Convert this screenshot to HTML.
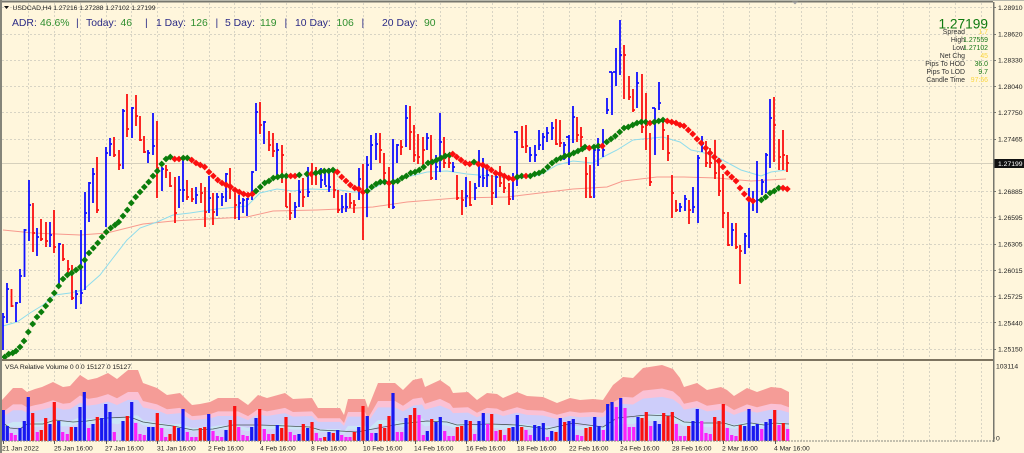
<!DOCTYPE html>
<html><head><meta charset="utf-8"><style>
html,body{margin:0;padding:0;background:#fff6dc}
svg{display:block;font-family:"Liberation Sans",sans-serif}
</style></head><body>
<svg width="1024" height="453" viewBox="0 0 1024 453" xmlns="http://www.w3.org/2000/svg">
<defs>
<marker id="dg" markerUnits="userSpaceOnUse" markerWidth="8" markerHeight="8" refX="4" refY="4" overflow="visible"><path d="M4 .6L7.400 4 4 7.400 .6 4z" fill="#0b7d0b"/></marker>
<marker id="dr" markerUnits="userSpaceOnUse" markerWidth="8" markerHeight="8" refX="4" refY="4" overflow="visible"><path d="M4 .6L7.400 4 4 7.400 .6 4z" fill="#fb0f0f"/></marker>
<path id="band" d="M2 441V400L13 388 22 388 27 392 35 389 42 387 53 382 63 387 70 386 80 375 88 380 97 378 108 373 117 379 128 370 138 370 143 383 157 388 167 395 180 393 192 405 200 404 210 402 218 398 238 398 248 405 258 395 267 398 285 393 293 399 312 398 318 408 340 408 344 415 348 399 365 399 368 408 378 383 395 383 403 390 413 380 422 378 425 387 440 380 450 387 453 393 468 392 477 400 487 393 497 394 503 398 517 392 527 396 543 397 557 403 570 398 580 400 593 399 603 400 613 385 623 377 633 378 643 368 662 365 673 369 680 378 684 387 697 383 707 390 721 387 727 390 734 396 747 388 757 392 771 387 781 388 789 392V441z"/>
</defs>
<rect width="1024" height="453" fill="#fff6dc"/>
<!-- grid -->
<path d="M2 7.5H993M2 34.5H993M2 60.5H993M2 86.5H993M2 112.5H993M2 139.5H993M2 191.5H993M2 217.5H993M2 244.5H993M2 270.5H993M2 296.5H993M2 322.5H993M2 349.5H993" stroke="#d8d4c4" stroke-width="1" stroke-dasharray="2 2" fill="none"/>
<path d="M28.5 3V441M54.5 3V441M80.5 3V441M106.5 3V441M131.5 3V441M157.5 3V441M183.5 3V441M209.5 3V441M234.5 3V441M260.5 3V441M286.5 3V441M312.5 3V441M337.5 3V441M363.5 3V441M389.5 3V441M415.5 3V441M440.5 3V441M466.5 3V441M492.5 3V441M517.5 3V441M543.5 3V441M569.5 3V441M595.5 3V441M621.5 3V441M646.5 3V441M672.5 3V441M697.5 3V441M723.5 3V441M749.5 3V441M775.5 3V441M801.5 3V441M826.5 3V441M852.5 3V441M877.5 3V441M903.5 3V441M929.5 3V441M955.5 3V441M981.5 3V441" stroke="#d8d4c4" stroke-width="1" stroke-dasharray="2 2" fill="none"/>
<path d="M2 163.5H993" stroke="#d6d0bc" stroke-width="1"/>
<!-- moving averages -->
<polyline fill="none" stroke="#f79a8e" stroke-width="1" points="3,230 33,233 80,235 107,233 127,228 143,224 173,221 207,219 247,217 273,211 317,210 340,209 373,207 407,202 457,198 507,197 540,193 573,189 607,187 623,181 657,177 684,177 717,178 751,181 786,179"/>
<polyline fill="none" stroke="#8fdcec" stroke-width="1" points="3,326 17,322 30,313 43,305 55,295 70,293 83,290 100,275 113,258 127,240 140,228 157,222 173,215 190,213 217,209 247,206 260,193 277,189 293,191 310,189 340,190 353,192 367,192 383,183 407,177 427,172 447,171 467,174 490,176 513,179 540,175 557,165 573,161 593,163 607,155 617,150 633,140 663,137 680,142 691,150 701,152 717,157 741,170 761,176 771,172 786,170"/>
<!-- price bars -->
<path fill="none" stroke="#1010ff" stroke-width="1.800" d="M3 313V350M3 317h2M7 283V323M7 289h2M16 302V322M16 303h2M20 269V303M20 276h2M24.500 229V277M24.500 230h2M29 180V241M29 205h2M37 228V256M37 237h2M50 222V247M50 235h2M59 243V284M59 244h2M76 290V309M76 294h2M81 230V304M81 293h2M85 192V290M85 213h2M89 182V222M89 183h2M93 168V203M93 174h2M106 147V227M106 153h2M110 138V156M110 144h2M123 109V169M123 111h2M132 107V138M132 108h2M148 150V163M148 153h2M153 113V155M153 146h2M162 167V191M162 169h2M179 176V208M179 190h2M183 160V202M183 190h2M196 187V204M196 195h2M209 176V213M209 198h2M217 193V216M217 197h2M222 193V206M222 197h2M226 173V202M226 174h2M239 195V220M239 203h2M243 198V213M243 200h2M247 198V216M247 199h2M252 171V200M252 172h2M256 103V171M256 112h2M264 121V144M264 122h2M277 143V175M277 150h2M295 202V218M295 207h2M299 180V207M299 192h2M308 167V197M308 192h2M321 168V188M321 180h2M325 170V185M325 186h2M329 168V192M329 187h2M342 195V213M342 207h2M346 193V212M346 207h2M359 168V200M359 179h2M367 156V217M367 165h2M371 135V170M371 145h2M376 133V160M376 144h2M393 139V209M393 207h2M397 144V163M397 145h2M406 105V147M406 118h2M427 133V150M427 138h2M436 155V180M436 167h2M440 113V172M440 142h2M453 162V172M453 167h2M466 177V207M466 196h2M475 183V200M475 188h2M479 150V187M479 177h2M483 158V187M483 178h2M487 168V187M487 175h2M496 172V198M496 177h2M513 173V200M513 178h2M517 131V186M517 132h-3M530 147V162M530 155h2M535 145V162M535 155h2M539 130V150M539 145h2M543 133V150M543 137h2M547 127V142M547 133h2M552 122V140M552 128h2M564 142V160M564 145h2M569 135V165M569 137h-3M573 106V143M573 117h2M594 147V198M594 150h2M598 138V166M598 150h2M603 129V157M603 150h2M607 98V114M607 110h2M612 72V115M612 72h-3M616 48V86M616 72h-3M620 20V75M620 55h2M637 72V108M637 83h2M655 108V155M655 108h-3M659 82V110M659 103h2M680 203V212M680 207h2M685 195V211M685 199h2M693 187V213M693 207h2M698 155V223M698 158h2M702 136V152M702 144h2M732 223V246M732 230h2M745 233V254M745 236h2M749 188V248M749 200h2M753 191V211M753 200h2M757 161V213M757 200h2M762 179V195M762 182h2M766 153V193M766 155h2M770 99V168M770 118h2"/>
<path fill="none" stroke="#fb1010" stroke-width="1.800" d="M11.500 289V307M11.500 306h2M33 203V252M33 233h2M41 219V241M41 239h2M46 222V247M46 241h2M54 210V253M54 247h2M63 244V261M63 259h2M68 260V274M68 269h2M72 265V300M72 298h2M97 157V213M97 210h2M114 137V157M114 155h2M119 150V170M119 165h2M127 94V137M127 129h2M136 95V126M136 116h2M140 116V141M140 140h2M144 136V153M144 152h2M157 121V198M157 168h2M166 165V178M166 170h2M170 172V187M170 186h2M175 177V223M175 213h2M187 180V200M187 197h2M192 188V202M192 199h2M201 183V203M201 193h2M205 187V227M205 212h2M213 193V225M213 212h2M230 168V199M230 188h2M235 193V219M235 205h2M260 102V134M260 125h2M269 131V151M269 145h2M273 133V157M273 151h2M282 145V183M282 155h2M286 177V207M286 207h2M290 193V220M290 213h2M303 178V207M303 197h2M312 163V185M312 173h2M316 167V185M316 173h2M334 171V198M334 190h2M338 190V213M338 210h2M350 193V208M350 203h2M354 200V213M354 205h2M363 164V240M363 192h2M380 133V163M380 150h2M384 153V182M384 173h2M389 167V208M389 183h2M401 140V155M401 147h2M410 106V150M410 132h2M414 125V162M414 155h2M418 134V164M418 157h2M423 137V167M423 150h2M431 135V180M431 178h2M444 137V168M444 163h2M449 157V168M449 163h2M457 175V200M457 198h2M462 190V215M462 200h2M470 181V206M470 205h2M492 175V205M492 193h2M500 166V187M500 183h2M504 177V193M504 188h2M509 183V205M509 199h2M522 126V148M522 147h2M526 125V153M526 146h2M556 119V145M556 144h2M560 120V147M560 143h2M577 117V142M577 135h2M581 127V147M581 137h2M586 157V198M586 174h2M590 165V198M590 197h2M624 45V99M624 55h2M629 76V100M629 97h2M633 89V112M633 110h2M642 74V133M642 127h2M646 93V150M646 125h2M650 133V186M650 182h2M663 118V150M663 130h2M668 135V161M668 153h2M672 175V218M672 193h2M676 200V212M676 210h2M689 200V224M689 210h2M706 141V167M706 163h2M710 148V168M710 163h2M715 140V179M715 173h2M719 158V196M719 191h2M723 174V228M723 213h2M728 212V246M728 245h2M736 223V249M736 247h2M740 245V284M740 251h2M774 97V162M774 125h2M779 139V170M779 157h2M783 130V170M783 155h2M787 155V172M787 163h2"/>
<!-- trend dots -->
<polyline fill="none" marker-start="url(#dg)" marker-mid="url(#dg)" marker-end="url(#dg)" points="4.700,357 8.700,354 12.700,353 16,351 20,347 24,341 28.300,332 32.700,324 37,317 41.300,312 45.700,306 50,300 54.300,293 58.700,286 63,279 67.300,275 71.700,273 76,270 80.300,267 84.700,260 89,253 93.300,248 97.700,243 102,237 106.300,232 110.700,228 115,225 118.700,222 123,216 127.300,210 131.300,203 135.700,197 140,192 144.300,187 148.700,182 153,176 157.300,171 161.700,164 166,159 170.300,157"/>
<polyline fill="none" marker-start="url(#dr)" marker-mid="url(#dr)" marker-end="url(#dr)" points="174.700,159 179,159"/>
<polyline fill="none" marker-start="url(#dg)" marker-mid="url(#dg)" marker-end="url(#dg)" points="183.300,158 187.300,158"/>
<polyline fill="none" marker-start="url(#dr)" marker-mid="url(#dr)" marker-end="url(#dr)" points="191.700,160 196,163 200.300,165 204.700,167 209,172 213.300,176 217.700,180 222,183 226.300,185 230.700,187 235,190 239.300,192 243.700,194 248,195 252.300,194"/>
<polyline fill="none" marker-start="url(#dg)" marker-mid="url(#dg)" marker-end="url(#dg)" points="256,191 260.300,187 264.700,183 269,181 273.300,178 277.700,177 282,176 286.300,176"/>
<polyline fill="none" marker-start="url(#dr)" marker-mid="url(#dr)" marker-end="url(#dr)" points="290.700,176 295,176"/>
<polyline fill="none" marker-start="url(#dg)" marker-end="url(#dg)" points="299.300,175 307,174"/>
<polyline fill="none" marker-start="url(#dr)" points="311.300,174 311.300,174"/>
<polyline fill="none" marker-start="url(#dg)" marker-mid="url(#dg)" marker-end="url(#dg)" points="315.700,173 320,172 324.300,171 328.700,171 333,170"/>
<polyline fill="none" marker-start="url(#dr)" marker-mid="url(#dr)" marker-end="url(#dr)" points="337.300,172 341.700,177 346,181 350.300,185 354.700,188 358.700,189 363,192"/>
<polyline fill="none" marker-start="url(#dg)" marker-mid="url(#dg)" marker-end="url(#dg)" points="367.300,191 371.700,187 376,184 380.300,182 384.700,182"/>
<polyline fill="none" marker-start="url(#dr)" points="389,183 389,183"/>
<polyline fill="none" marker-start="url(#dg)" marker-mid="url(#dg)" marker-end="url(#dg)" points="393.300,182 397.700,181 402,178 406.300,176 410.700,173 415,172 419.300,170 423.700,167 428,163 432.300,162 436.700,160 441,158 445.300,156 449.700,155"/>
<polyline fill="none" marker-start="url(#dr)" marker-mid="url(#dr)" marker-end="url(#dr)" points="452.700,154 456.700,157 461,160 465.300,163 469.700,164"/>
<polyline fill="none" marker-start="url(#dg)" points="474,162 474,162"/>
<polyline fill="none" marker-start="url(#dr)" marker-mid="url(#dr)" marker-end="url(#dr)" points="478.300,164 482.700,165 487,167 491.300,170 495.700,173 500,174 504.300,176 508.700,178 513,179"/>
<polyline fill="none" marker-start="url(#dg)" marker-end="url(#dg)" points="517.300,177 521.700,176"/>
<polyline fill="none" marker-start="url(#dr)" points="526,176 526,176"/>
<polyline fill="none" marker-start="url(#dg)" marker-mid="url(#dg)" marker-end="url(#dg)" points="530.300,176 534.700,174 539,173 543.300,171 547.700,167 552,163 556.300,160 560.700,158 565,156 569.300,155 573.700,153 578,151 582.300,149 585,147"/>
<polyline fill="none" marker-start="url(#dr)" points="589.300,148 589.300,148"/>
<polyline fill="none" marker-start="url(#dg)" marker-end="url(#dg)" points="594,147 598.300,146"/>
<polyline fill="none" marker-start="url(#dr)" points="602.300,146 602.300,146"/>
<polyline fill="none" marker-start="url(#dg)" marker-mid="url(#dg)" marker-end="url(#dg)" points="606.700,142 611,139 615.300,136 619.700,132 624,128 628.300,127 632.700,125 637,123 641.300,122 645.700,122"/>
<polyline fill="none" marker-start="url(#dr)" points="650,123 650,123"/>
<polyline fill="none" marker-start="url(#dg)" marker-mid="url(#dg)" marker-end="url(#dg)" points="654.300,122 658.700,121 663,120"/>
<polyline fill="none" marker-start="url(#dr)" marker-mid="url(#dr)" marker-end="url(#dr)" points="667.300,121 671.700,122 676,123 680,125 684,126 688.300,130 692.700,134 697,139 701.300,143 705.700,148 710,153 714.300,157 718.700,161 723,167 727.300,173 731.700,177 736,181 740,188 744.300,194 748.700,199 753,201"/>
<polyline fill="none" marker-start="url(#dg)" marker-mid="url(#dg)" marker-end="url(#dg)" points="761.300,200 765.700,197 770,193 774.300,191 778.700,188"/>
<polyline fill="none" marker-start="url(#dr)" marker-end="url(#dr)" points="783,188 787.300,189"/>
<!-- header texts -->
<path d="M4 6h5l-2.500 3z" fill="#111"/>
<text x="12.500" y="10" font-size="6.800" fill="#222" textLength="143">USDCAD,H4  1.27216 1.27288 1.27102 1.27199</text>
<g font-size="10.400" fill="#2b2b86">
<text x="12" y="26">ADR:</text><text x="76" y="26">|</text><text x="86" y="26">Today:</text><text x="145" y="26">|</text><text x="156" y="26">1 Day:</text><text x="215.500" y="26">|</text><text x="225" y="26">5 Day:</text><text x="284.500" y="26">|</text><text x="295" y="26">10 Day:</text><text x="361.500" y="26">|</text><text x="382" y="26">20 Day:</text>
</g>
<g font-size="10.400" fill="#2f8f2f">
<text x="40" y="26">46.6%</text><text x="120.500" y="26">46</text><text x="190.500" y="26">126</text><text x="260" y="26">119</text><text x="336.500" y="26">106</text><text x="424" y="26">90</text>
</g>
<!-- stats -->
<text x="988" y="28.500" font-size="13.700" fill="#0f7a0f" text-anchor="end">1.27199</text>
<g font-size="6.900" fill="#333" text-anchor="end">
<text x="965" y="34">Spread</text><text x="965" y="42">High</text><text x="965" y="50">Low</text><text x="965" y="58">Net Chg</text><text x="965" y="66">Pips To HOD</text><text x="965" y="74">Pips To LOD</text><text x="965" y="82">Candle Time</text>
</g>
<g font-size="6.900" text-anchor="end">
<text x="988" y="34" fill="#fbd640">1.7</text><text x="988" y="42" fill="#187818">1.27559</text><text x="988" y="50" fill="#187818">1.27102</text><text x="988" y="58" fill="#fbd640">45</text><text x="988" y="66" fill="#187818">36.0</text><text x="988" y="74" fill="#187818">9.7</text><text x="988" y="82" fill="#fbd640">97:56</text>
</g>
<!-- volume panel -->
<use href="#band" fill="#f59c97"/>
<use href="#band" fill="#fbc1d4" transform="translate(0 441) scale(1 .69) translate(0 -441)"/>
<use href="#band" fill="#cdcdfa" transform="translate(0 441) scale(1 .58) translate(0 -441)"/>
<use href="#band" fill="#cbe6f6" transform="translate(0 441) scale(1 .36) translate(0 -441)"/>
<use href="#band" fill="#d2d2f8" transform="translate(0 441) scale(1 .27) translate(0 -441)"/>
<polyline fill="none" stroke="#4a5656" stroke-width=".8" points="3,423 10,428 20,429 27,424 43,424 55,420 73,422 87,421 107,418 130,417 143,422 157,424 173,426 193,430 213,429 233,425 260,425 287,426 310,427 320,430 340,431 357,432 373,429 400,424 427,421 447,422 457,425 490,424 517,425 547,429 573,423 603,427 617,418 647,415 673,416 684,422 704,423 724,423 734,426 751,423 764,425 774,423 789,424"/>
<path fill="none" stroke="#1818f0" stroke-width="3.200" d="M3.300 441V410M7.300 441V426M20 441V428M24.300 441V421M28.300 441V397M50 441V424M58.700 441V421M75.700 441V427M80 441V407M84.300 441V392M93 441V424M101.700 441V418M105.700 441V404M110 441V412M123 441V421M131.700 441V402M148.700 441V427M153 441V427M178.700 441V428M183 441V409M208.700 441V414M226 441V430M251.700 441V427M256 441V418M277.300 441V425M299 441V434M307.700 441V428M329 441V432M337.700 441V430M358.700 441V427M367.300 441V416M376 441V433M393 441V393M406 441V418M427.300 441V431M436 441V422M440.300 441V417M466 441V420M479 441V421M483.300 441V413M513 441V427M517.300 441V415M534.700 441V425M539 441V426M543.300 441V423M551.700 441V431M560.300 441V418M569 441V421M573.300 441V419M594.700 441V417M599 441V426M607.700 441V404M612 441V402M620.700 441V398M638 441V417M655 441V421M659.300 441V424M693 441V421M697.300 441V409M744.700 441V426M749 441V409M753.300 441V426M757.300 441V424M766 441V422M770.300 441V419"/>
<path fill="none" stroke="#fb1010" stroke-width="3.200" d="M32.700 441V413M41.300 441V430M45.700 441V418M54.300 441V402M71.300 441V427M97.300 441V417M127.300 441V416M157.300 441V413M170 441V434M174.300 441V426M200.300 441V428M204.700 441V427M230.300 441V420M234.700 441V406M259.700 441V409M273 441V434M281.700 441V428M286 441V417M303.300 441V424M312 441V422M324.700 441V437M333.300 441V433M354.300 441V432M363 441V406M380.300 441V424M384.700 441V428M389 441V416M410.300 441V415M414.700 441V408M431.700 441V419M457.300 441V427M461.700 441V426M470.300 441V421M491.700 441V414M500.300 441V430M509 441V428M521.700 441V427M556 441V432M564.700 441V422M586 441V428M590.300 441V427M642 441V418M646.300 441V412M663.700 441V413M668 441V416M672.300 441V412M688.700 441V426M714.700 441V417M719 441V421M723.300 441V404M740.300 441V425M774.700 441V410M783.300 441V423"/>
<path fill="none" stroke="#fb22fb" stroke-width="3.200" d="M11.300 441V433M15.300 441V435M37.300 441V432M62.700 441V432M67.300 441V434M88.700 441V428M114.300 441V432M135.700 441V423M140 441V434M144.300 441V435M161.700 441V428M165.700 441V437M187.300 441V432M191.700 441V437M196 441V437M213 441V431M217.300 441V436M221.700 441V437M238.700 441V427M243 441V435M247.300 441V436M264.300 441V429M268.700 441V434M290.300 441V432M294.700 441V435M316.300 441V433M320.300 441V438M341.700 441V435M346 441V437M350 441V437M371.700 441V433M397.300 441V432M401.700 441V432M419 441V415M423.300 441V435M444.700 441V431M449 441V436M453.300 441V436M474.700 441V434M487.700 441V424M496 441V431M504.700 441V435M526 441V430M530.300 441V435M547.300 441V437M577.300 441V435M581.700 441V436M603.300 441V430M616.300 441V407M625 441V408M629.300 441V427M633.700 441V427M650.700 441V426M676.300 441V424M680.300 441V436M684.700 441V436M701.700 441V421M706 441V433M710.300 441V434M727.300 441V428M731.700 441V435M736 441V436M761.700 441V429M779 441V425M787.700 441V429"/>
<path d="M2 441H993" stroke="#8a8a80" stroke-width="1" stroke-dasharray="2 1" fill="none"/>
<text x="5" y="369" font-size="6.800" fill="#222" textLength="126">VSA Relative Volume 0 0 0 15127 0 15127</text>
<!-- frame -->
<rect x="0" y="0" width="1024" height="1" fill="#b8b8ac"/>
<rect x="0" y="1" width="993" height="1.500" fill="#77776e"/>
<rect x="0" y="0" width="2" height="453" fill="#85857a"/>
<rect x="2" y="359" width="991" height="2" fill="#7d7460"/>
<rect x="993" y="2" width="1.500" height="440" fill="#77776e"/>
<path d="M792 1.500h6l-3 3z" fill="#a0a0a0"/>
<!-- axis -->
<path d="M994 7.500h2M994 34.500h2M994 60.500h2M994 86.500h2M994 112.500h2M994 139.500h2M994 191.500h2M994 217.500h2M994 244.500h2M994 270.500h2M994 296.500h2M994 322.500h2M994 349.500h2M994 438h1" stroke="#77776e" stroke-width="1"/>
<g font-size="6.800" fill="#222">
<text x="998" y="10">1.28910</text><text x="998" y="36.500">1.28620</text><text x="998" y="62.500">1.28330</text><text x="998" y="89">1.28040</text><text x="998" y="115">1.27750</text><text x="998" y="141.500">1.27465</text><text x="998" y="194">1.26885</text><text x="998" y="220">1.26595</text><text x="998" y="246.500">1.26305</text><text x="998" y="273">1.26015</text><text x="998" y="299">1.25725</text><text x="998" y="325.500">1.25440</text><text x="998" y="351.500">1.25150</text>
<text x="996" y="368.500">103114</text><text x="996" y="440.500">0</text>
</g>
<rect x="994.500" y="159" width="29.500" height="9" fill="#111"/>
<text x="998" y="166" font-size="6.800" fill="#fff">1.27199</text>
<path d="M3.500 441v3M54.500 441v3M106.500 441v3M157.500 441v3M209.500 441v3M260.500 441v3M312.500 441v3M363.500 441v3M415.500 441v3M466.500 441v3M517.500 441v3M569.500 441v3M621.500 441v3M672.500 441v3M723.500 441v3M775.500 441v3" stroke="#555" stroke-width="1"/>
<g font-size="6.700" fill="#222">
<text x="2" y="450.500">21 Jan 2022</text><text x="54" y="450.500">25 Jan 16:00</text><text x="105" y="450.500">27 Jan 16:00</text><text x="157" y="450.500">31 Jan 16:00</text><text x="208" y="450.500">2 Feb 16:00</text><text x="260" y="450.500">4 Feb 16:00</text><text x="311" y="450.500">8 Feb 16:00</text><text x="363" y="450.500">10 Feb 16:00</text><text x="414" y="450.500">14 Feb 16:00</text><text x="466" y="450.500">16 Feb 16:00</text><text x="517" y="450.500">18 Feb 16:00</text><text x="569" y="450.500">22 Feb 16:00</text><text x="620" y="450.500">24 Feb 16:00</text><text x="672" y="450.500">28 Feb 16:00</text><text x="722" y="450.500">2 Mar 16:00</text><text x="774" y="450.500">4 Mar 16:00</text>
</g>
</svg>
</body></html>
